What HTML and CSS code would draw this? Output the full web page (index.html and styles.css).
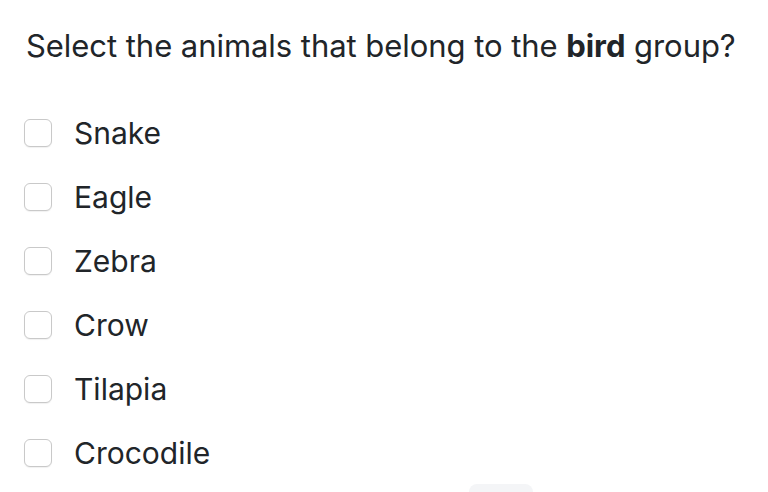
FILE: index.html
```html
<!DOCTYPE html>
<html>
<head>
<meta charset="utf-8">
<link rel="stylesheet" href="styles.css">
</head>
<body>
<div class="quiz">
  <h1 class="question">Select the animals that belong to the <b>bird</b> group?</h1>
  <ul class="options">
    <li class="option"><span class="box"></span><span class="label">Snake</span></li>
    <li class="option"><span class="box"></span><span class="label">Eagle</span></li>
    <li class="option"><span class="box"></span><span class="label">Zebra</span></li>
    <li class="option"><span class="box"></span><span class="label">Crow</span></li>
    <li class="option"><span class="box"></span><span class="label">Tilapia</span></li>
    <li class="option"><span class="box"></span><span class="label">Crocodile</span></li>
  </ul>
  <div class="footer"><span class="btn"></span></div>
</div>
</body>
</html>
```
FILE: styles.css
```css
html, body {
  margin: 0;
  padding: 0;
  background: #ffffff;
}
body {
  font-family: Inter, "Liberation Sans", sans-serif;
  color: #212529;
  overflow: hidden;
  height: 492px;
}
.quiz {
  padding: 26px 0 0 26px;
}
.question {
  margin: 0;
  font-size: 31px;
  font-weight: 400;
  line-height: 40px;
  letter-spacing: -0.05px;
}
.question b {
  font-weight: 700;
}
.options {
  list-style: none;
  margin: 47px 0 0 0;
  padding: 0;
  display: flex;
  flex-direction: column;
  gap: 24px;
}
.option {
  display: flex;
  align-items: center;
  height: 40px;
}
.box {
  box-sizing: border-box;
  width: 28px;
  height: 28px;
  margin-left: -2px;
  border: 1px solid #c9c9c9;
  border-radius: 6px;
  background: #fff;
  box-shadow: 0 1px 1px rgba(0,0,0,0.06);
}
.label {
  margin-left: 22px;
  font-size: 30px;
  line-height: 40px;
}
.footer {
  display: flex;
  margin-top: 11px;
  padding-left: 443px;
}
.btn {
  display: block;
  width: 64px;
  height: 8px;
  background: #f4f5f7;
  border-radius: 8px 8px 0 0;
}
```
